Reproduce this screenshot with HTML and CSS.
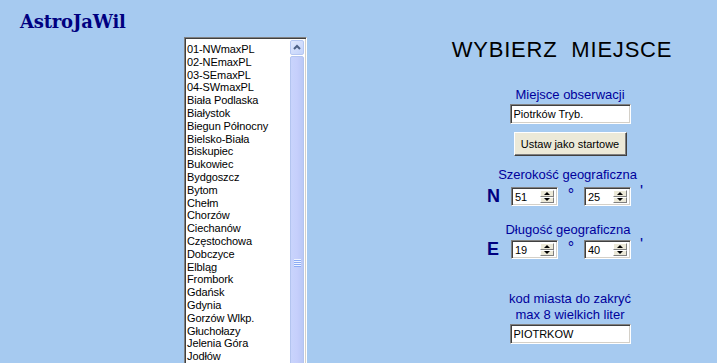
FILE: index.html
```html
<!doctype html>
<html lang="pl">
  <head>
    <meta charset="UTF-8" />
    <meta name="viewport" content="width=device-width, initial-scale=1.0" />
    <title>AstroJaWil - Wybierz miejsce</title>
    <link rel="stylesheet" href="styles.css">
  </head>
  <body>
    <div class="window">
      <div class="brand">AstroJaWil</div>

      <div class="listbox">
        <ul class="places">
          <li>01-NWmaxPL</li>
          <li>02-NEmaxPL</li>
          <li>03-SEmaxPL</li>
          <li>04-SWmaxPL</li>
          <li>Biała Podlaska</li>
          <li>Białystok</li>
          <li>Biegun Północny</li>
          <li>Bielsko-Biała</li>
          <li>Biskupiec</li>
          <li>Bukowiec</li>
          <li>Bydgoszcz</li>
          <li>Bytom</li>
          <li>Chełm</li>
          <li>Chorzów</li>
          <li>Ciechanów</li>
          <li>Częstochowa</li>
          <li>Dobczyce</li>
          <li>Elbląg</li>
          <li>Frombork</li>
          <li>Gdańsk</li>
          <li>Gdynia</li>
          <li>Gorzów Wlkp.</li>
          <li>Głuchołazy</li>
          <li>Jelenia Góra</li>
          <li>Jodłów</li>
        </ul>
        <div class="scrollbar">
          <div class="scroll-btn">
            <svg viewBox="0 0 14 15" width="14" height="15">
              <path d="M4 9 L7 6 L10 9" stroke="#4d6185" stroke-width="2" fill="none" />
            </svg>
          </div>
          <div class="thumb"><span class="grip"></span></div>
        </div>
      </div>

      <div class="panel">
        <h1 class="heading">WYBIERZ  MIEJSCE</h1>

        <div class="label label-place">Miejsce obserwacji</div>
        <input class="field" type="text" value="Piotrków Tryb." />
        <button class="btn">Ustaw jako startowe</button>

        <div class="label label-lat">Szerokość geograficzna</div>
        <div class="coord">
          <span class="axis">N</span>
          <div class="spin">
            <input type="text" value="51" />
            <div class="spin-btns"><span class="up"></span><span class="down"></span></div>
          </div>
          <span class="deg">°</span>
          <div class="spin">
            <input type="text" value="25" />
            <div class="spin-btns"><span class="up"></span><span class="down"></span></div>
          </div>
          <span class="min">'</span>
        </div>

        <div class="label label-lon">Długość geograficzna</div>
        <div class="coord coord-lon">
          <span class="axis">E</span>
          <div class="spin">
            <input type="text" value="19" />
            <div class="spin-btns"><span class="up"></span><span class="down"></span></div>
          </div>
          <span class="deg">°</span>
          <div class="spin">
            <input type="text" value="40" />
            <div class="spin-btns"><span class="up"></span><span class="down"></span></div>
          </div>
          <span class="min">'</span>
        </div>

        <div class="label label-code">kod miasta do zakryć</div>
        <div class="label">max 8 wielkich liter</div>
        <input class="field" type="text" value="PIOTRKOW" />
      </div>
    </div>
  </body>
</html>
```

FILE: styles.css
```css
* {
  box-sizing: border-box;
  margin: 0;
  padding: 0;
}

body {
  font-family: "Liberation Sans", Arial, sans-serif;
  background: #a6caf0;
  height: 363px;
  overflow: hidden;
}

.window {
  display: flex;
  align-items: flex-start;
  height: 363px;
}

.brand {
  width: 184px;
  padding: 12px 0 0 20px;
  font-family: "DejaVu Serif", serif;
  font-size: 18px;
  font-weight: bold;
  line-height: 20px;
  letter-spacing: -0.2px;
  color: #000080;
}

/* sunken list with XP scrollbar */
.listbox {
  display: flex;
  width: 123px;
  height: 500px;
  margin-top: 37px;
  padding: 1px;
  background: #fff;
  border: 1px solid;
  border-color: #808080 #fff #fff #808080;
  box-shadow: inset 1px 1px #404040, inset -1px -1px #d4d0c8;
}

.places {
  flex: 1;
  list-style: none;
  padding: 4px 0 0 1px;
  font-size: 11px;
  line-height: 12.8px;
  letter-spacing: -0.1px;
  color: #000;
  white-space: nowrap;
}

.scrollbar {
  display: flex;
  flex-direction: column;
  width: 16px;
  padding: 1px 1px 0;
  background: #fff;
}

.scroll-btn {
  height: 15px;
  margin-bottom: 1px;
  border: 1px solid #b5c7f2;
  border-radius: 2px;
  background: linear-gradient(135deg, #e0e8fd 0%, #c3d3fb 100%);
}

.scroll-btn svg {
  display: block;
  margin: -1px 0 0 -1px;
}

.thumb {
  display: flex;
  align-items: center;
  justify-content: center;
  height: 414px;
  border: 1px solid #b3c4ef;
  border-radius: 2px;
  background: linear-gradient(to right, #c8d4fc 0%, #c6cffb 50%, #bac8f6 100%);
}

.grip {
  width: 7px;
  height: 8px;
  background: repeating-linear-gradient(
    to bottom,
    #eef3ff 0,
    #eef3ff 1px,
    #8cabf4 1px,
    #8cabf4 2px
  );
}

/* right side form */
.panel {
  display: flex;
  flex-direction: column;
  align-items: center;
  width: 260px;
  margin-left: 133px;
}

.heading {
  margin: 37px 16px 0 0;
  font-size: 22px;
  font-weight: normal;
  line-height: 26px;
  letter-spacing: 0.8px;
  white-space: pre;
  color: #000;
}

.label {
  font-size: 13px;
  line-height: 16px;
  color: #00009c;
  white-space: nowrap;
}

.label-place {
  margin-top: 24px;
}

.label-lat {
  margin: 11px 5px 0 0;
}

.label-lon {
  margin: 16px 4px 0 0;
}

.label-code {
  margin-top: 32px;
}

.field,
.spin {
  border: 1px solid;
  border-color: #808080 #fff #fff #808080;
  box-shadow: inset 1px 1px #404040, inset -1px -1px #d4d0c8;
  background: #fff;
}

.field {
  width: 121px;
  height: 20px;
  margin-top: 1px;
  padding: 0 2px 0 3px;
  font-family: "Liberation Sans", Arial, sans-serif;
  font-size: 11px;
  color: #000;
  outline: none;
}

.btn {
  width: 113px;
  height: 24px;
  margin-top: 8px;
  padding: 0;
  background: #ece9d8;
  border: 1px solid;
  border-color: #fff #404040 #404040 #fff;
  box-shadow: inset -1px -1px #808080;
  font-family: "Liberation Sans", Arial, sans-serif;
  font-size: 11px;
  white-space: nowrap;
  color: #000;
}

.coord {
  display: flex;
  align-items: center;
  height: 19px;
  margin: 4px 9px 0 0;
}

.coord-lon {
  margin-top: 2px;
}

.axis {
  width: 14px;
  margin-right: 10px;
  font-size: 18px;
  font-weight: bold;
  line-height: 19px;
  color: #000080;
}

.spin {
  display: flex;
  width: 47px;
  height: 19px;
  padding: 2px;
}

.spin input {
  flex: 1;
  min-width: 0;
  padding-left: 1px;
  border: none;
  background: transparent;
  font-family: "Liberation Sans", Arial, sans-serif;
  font-size: 11px;
  color: #000;
  outline: none;
}

.spin-btns {
  display: flex;
  flex-direction: column;
  width: 14px;
  margin-right: 1px;
}

.spin-btns span {
  flex: 1;
  display: flex;
  align-items: center;
  justify-content: center;
  background: #ece9d8;
  border: 1px solid;
  border-color: #fff #808080 #808080 #fff;
}

.spin-btns .up::after,
.spin-btns .down::after {
  content: "";
  width: 0;
  height: 0;
  border-left: 3.5px solid transparent;
  border-right: 3.5px solid transparent;
}

.spin-btns .up::after {
  border-bottom: 3px solid #000;
}

.spin-btns .down::after {
  border-top: 3px solid #000;
}

.deg {
  align-self: flex-start;
  width: 26px;
  font-size: 16px;
  line-height: 16px;
  text-align: center;
  color: #00009c;
}

.min {
  align-self: flex-start;
  width: 13px;
  padding-left: 9px;
  font-size: 16px;
  line-height: 10px;
  color: #00009c;
}
```
